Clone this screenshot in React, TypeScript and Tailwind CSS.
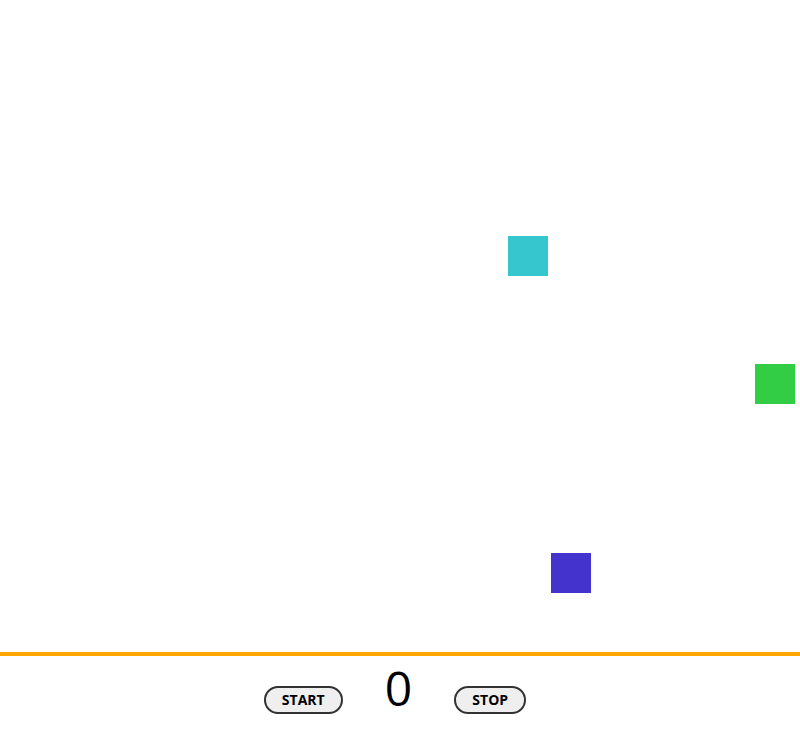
import { useState } from 'react';

type Box = { id: number; x: number; y: number; color: string };

const boxes: Box[] = [
  { id: 1, x: 508, y: 236, color: '#35c6ce' },
  { id: 2, x: 755, y: 364, color: '#32cd44' },
  { id: 3, x: 551, y: 553, color: '#4433cc' },
];

export default function App() {
  const [score, setScore] = useState(0);
  const [running, setRunning] = useState(false);

  return (
    <div className="w-full h-[736px] flex flex-col bg-white" style={{ fontFamily: '"Open Sans", "Noto Sans", sans-serif' }}>
      {/* playfield */}
      <div className="relative h-[656px] border-b-4 border-[#ffa500] shrink-0 overflow-hidden">
        {boxes.map((b) => (
          <div
            key={b.id}
            className="absolute w-10 h-10 cursor-pointer"
            style={{ left: b.x, top: b.y, backgroundColor: b.color }}
            onClick={() => running && setScore(score + 1)}
          />
        ))}
      </div>

      {/* controls */}
      <div className="flex items-start justify-center pr-[10px]">
        <button
          className="mt-[30px] w-[79px] h-7 rounded-full border-2 border-[#333] bg-[#efefef] text-[14px] font-bold text-black leading-none"
          onClick={() => setRunning(true)}
        >
          START
        </button>
        <span className="mx-[42px] mt-[8px] text-[48px] leading-none text-black">{score}</span>
        <button
          className="mt-[30px] w-[72px] h-7 rounded-full border-2 border-[#333] bg-[#efefef] text-[14px] font-bold text-black leading-none"
          onClick={() => setRunning(false)}
        >
          STOP
        </button>
      </div>
    </div>
  );
}
